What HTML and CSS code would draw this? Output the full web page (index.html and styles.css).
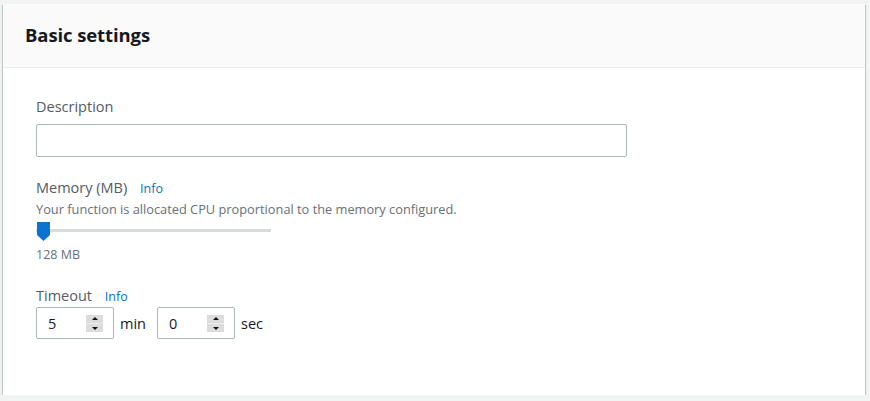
FILE: index.html
```html
<!DOCTYPE html>
<html>
<head>
<meta charset="utf-8">
<link rel="stylesheet" href="styles.css">
</head>
<body>
<div class="card">
  <div class="card-header">
    <h2 class="title">Basic settings</h2>
  </div>
  <div class="card-body">
    <div class="field">
      <label class="label">Description</label>
      <div class="text-input"></div>
    </div>
    <div class="field memory">
      <div class="label">Memory (MB) <span class="info">Info</span></div>
      <div class="desc">Your function is allocated CPU proportional to the memory configured.</div>
      <div class="slider">
        <div class="track"></div>
        <svg class="handle" width="13" height="19" viewBox="0 0 13 19"><path d="M0 0H13V13L6.5 19L0 13Z" fill="#0a74d0"/></svg>
      </div>
      <div class="value">128 MB</div>
    </div>
    <div class="field last">
      <div class="label">Timeout <span class="info">Info</span></div>
      <div class="timeout-row">
        <div class="num-input"><span class="num">5</span><span class="spin"><span class="up"></span><span class="down"></span></span></div>
        <span class="unit">min</span>
        <div class="num-input"><span class="num">0</span><span class="spin"><span class="up"></span><span class="down"></span></span></div>
        <span class="unit">sec</span>
      </div>
    </div>
  </div>
</div>
</body>
</html>
```
FILE: styles.css
```css
html, body {
  margin: 0;
  padding: 0;
  background: #f2f3f3;
  font-family: "Open Sans", "Liberation Sans", Arial, sans-serif;
}
body {
  padding: 4px 5px 0 3px;
}
.card {
  background: #fff;
  box-shadow: 0 1px 1px 0 rgba(0,28,36,0.3), 1px 1px 1px 0 rgba(0,28,36,0.15), -1px 1px 1px 0 rgba(0,28,36,0.15);
  height: 391px;
  box-sizing: border-box;
}
.card-header {
  background: #fafafa;
  border-bottom: 1px solid #eaeded;
  height: 64px;
  box-sizing: border-box;
  display: flex;
  align-items: center;
  padding: 0 22px;
}
.title {
  margin: 0;
  font-size: 18.5px;
  font-weight: 700;
  color: #16191f;
  padding-bottom: 2px;
  letter-spacing: -0.1px;
}
.card-body {
  padding: 28px 33px 0 33px;
}
.field {
  margin-bottom: 20px;
}
.field.memory {
  margin-bottom: 22px;
}
.label {
  display: block;
  font-size: 14.5px;
  color: #545b64;
  line-height: 22px;
}
.label .info {
  font-size: 12.5px;
  color: #0073bb;
  margin-left: 9px;
}
.text-input {
  margin-top: 6px;
  width: 591px;
  height: 33px;
  box-sizing: border-box;
  border: 1px solid #aab7b8;
  border-radius: 2px;
}
.desc {
  font-size: 12.8px;
  color: #687078;
  line-height: 18px;
  margin-top: 0;
}
.slider {
  position: relative;
  width: 235px;
  height: 19px;
  margin-top: 4px;
  display: flex;
  align-items: center;
}
.track {
  width: 100%;
  height: 3px;
  background: #d9dcdc;
  margin-top: -2px;
}
.handle {
  position: absolute;
  left: 1px;
  top: 0;
}
.value {
  font-size: 12.5px;
  color: #687078;
  margin-top: 6px;
  line-height: 16px;
}
.timeout-row {
  display: flex;
  align-items: center;
  margin-top: -1px;
}
.num-input {
  width: 78px;
  height: 32px;
  box-sizing: border-box;
  border: 1px solid #aab7b8;
  border-radius: 2px;
  display: flex;
  align-items: center;
  padding-left: 11px;
  padding-right: 10px;
}
.num {
  flex: 1;
  font-size: 14.5px;
  color: #16191f;
}
.spin {
  width: 17px;
  height: 17px;
  display: flex;
  flex-direction: column;
  justify-content: space-between;
  background: #ebebeb;
}
.spin .up, .spin .down {
  height: 8px;
  background: #dcdcdc;
  position: relative;
}
.spin .up::after {
  content: "";
  position: absolute;
  left: 6px;
  top: 2px;
  border-left: 3px solid transparent;
  border-right: 3px solid transparent;
  border-bottom: 3px solid #111;
}
.spin .down::after {
  content: "";
  position: absolute;
  left: 6px;
  top: 3px;
  border-left: 3px solid transparent;
  border-right: 3px solid transparent;
  border-top: 3px solid #111;
}
.unit {
  font-size: 14.5px;
  color: #16191f;
  margin: 0 11px 0 6px;
}
```
